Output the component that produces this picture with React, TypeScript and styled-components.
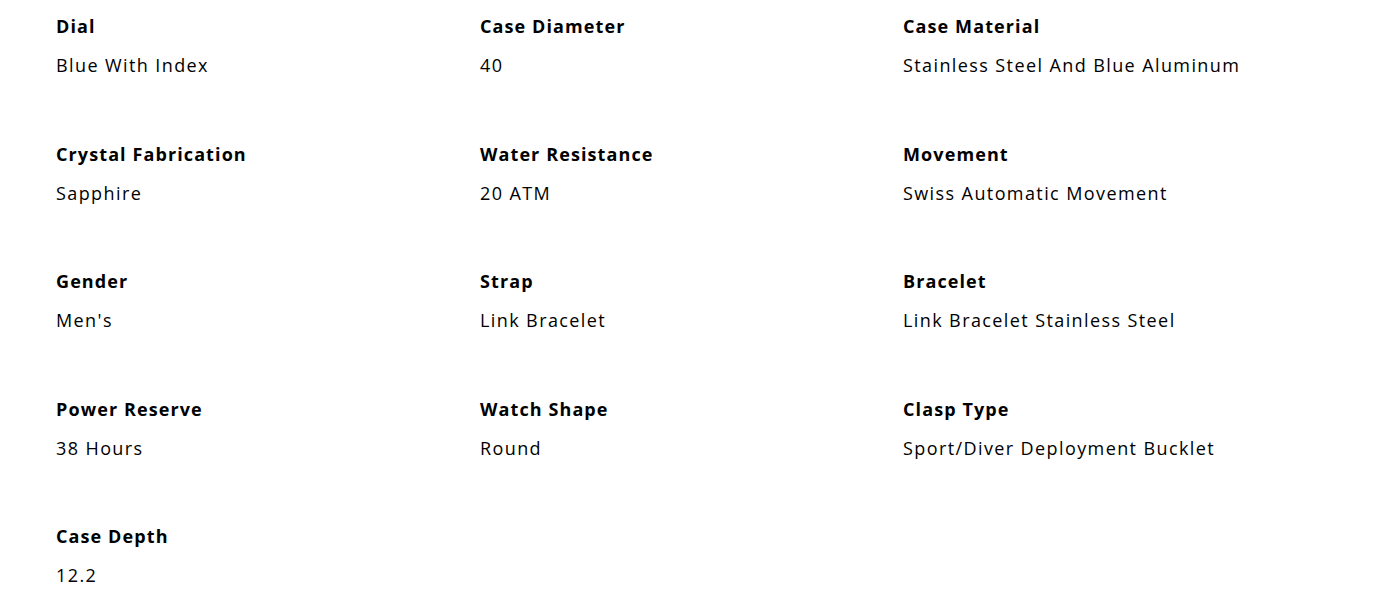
import styled, { createGlobalStyle } from 'styled-components';

const GlobalStyle = createGlobalStyle`
  body {
    margin: 0;
    background: #fff;
    font-family: "Open Sans", Lato, sans-serif;
    color: #000;
  }
`;

const Specs = styled.section`
  display: grid;
  grid-template-columns: 424px 423px 1fr;
  row-gap: 64.5px;
  padding: 14px 56px 0 56px;
`;

const Spec = styled.div`
  display: flex;
  flex-direction: column;
  gap: 15px;
`;

const Label = styled.h4`
  margin: 0;
  font-size: 18px;
  line-height: 24px;
  font-weight: 700;
  letter-spacing: 1.1px;
`;

const Value = styled.p`
  margin: 0;
  font-size: 18px;
  line-height: 24px;
  font-weight: 400;
  letter-spacing: 1.4px;
`;

const specs = [
  { label: 'Dial', value: 'Blue With Index' },
  { label: 'Case Diameter', value: '40' },
  { label: 'Case Material', value: 'Stainless Steel And Blue Aluminum' },
  { label: 'Crystal Fabrication', value: 'Sapphire' },
  { label: 'Water Resistance', value: '20 ATM' },
  { label: 'Movement', value: 'Swiss Automatic Movement' },
  { label: 'Gender', value: "Men's" },
  { label: 'Strap', value: 'Link Bracelet' },
  { label: 'Bracelet', value: 'Link Bracelet Stainless Steel' },
  { label: 'Power Reserve', value: '38 Hours' },
  { label: 'Watch Shape', value: 'Round' },
  { label: 'Clasp Type', value: 'Sport/Diver Deployment Bucklet' },
  { label: 'Case Depth', value: '12.2' },
];

function App() {
  return (
    <>
      <GlobalStyle />
      <Specs>
        {specs.map((s) => (
          <Spec key={s.label}>
            <Label>{s.label}</Label>
            <Value>{s.value}</Value>
          </Spec>
        ))}
      </Specs>
    </>
  );
}

export default App;
